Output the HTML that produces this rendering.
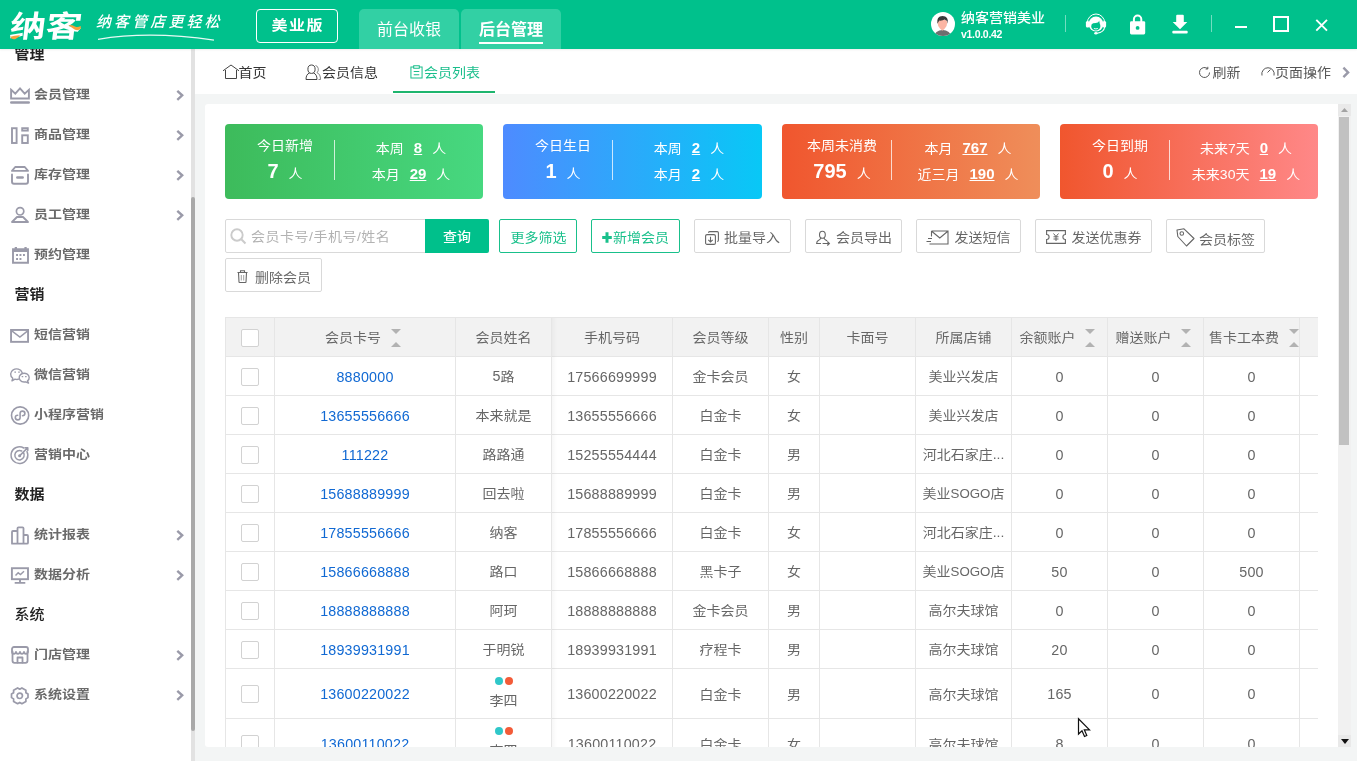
<!DOCTYPE html>
<html lang="zh-CN">
<head>
<meta charset="utf-8">
<title>纳客 - 会员列表</title>
<style>
*{box-sizing:border-box;margin:0;padding:0}
html,body{width:1357px;height:761px;overflow:hidden;background:#f3f5f5}
body{font-family:"Liberation Sans","Noto Sans CJK SC",sans-serif;font-size:14px;letter-spacing:0;color:#666;position:relative}
#L{position:absolute;left:0;top:0;width:1357px;height:761px;overflow:hidden;will-change:transform}
.z{display:inline-block;transform:scaleY(.9);transform-origin:50% calc(50% + 6px)}
.n{font-size:14px;letter-spacing:.2px}
.a{position:absolute;white-space:nowrap}
svg{position:absolute;overflow:visible}
/* top bar */
#top{position:absolute;left:0;top:0;width:1357px;height:49px;background:#00c18c;color:#fff;box-shadow:0 1px 2px rgba(0,0,0,.07);z-index:5}
#top .ver{position:absolute;left:256px;top:9px;width:82px;height:34px;border:1px solid #fff;border-radius:4px;font-size:16px;font-weight:bold;text-align:center;line-height:30px;letter-spacing:1.5px;padding-left:1.5px}
#top .tab{position:absolute;top:9px;height:40px;width:100px;background:#32d0a4;border-radius:5px 5px 0 0;font-size:16px;text-align:center;line-height:42px;letter-spacing:0}
#top .tab.on{font-weight:bold}
#top .tab.on:after{content:"";position:absolute;left:18px;width:64px;top:33px;height:2px;background:#fff}
#top .name{position:absolute;left:961px;top:8px;font-size:14px;font-weight:500;line-height:19px;white-space:nowrap;transform:scaleY(.9);transform-origin:0 calc(50% + 6px)}
#top .v{position:absolute;left:961px;top:27px;font-size:10.5px;line-height:14px;font-weight:bold;letter-spacing:-.3px}
#top .dv{position:absolute;top:15px;width:1px;height:17px;background:rgba(255,255,255,.45)}
/* sidebar */
#side{position:absolute;left:0;top:49px;width:191px;height:712px;background:#fff;overflow:hidden}
#side .h{position:absolute;left:14.500px;font-size:15px;font-weight:bold;color:#222;line-height:20px;white-space:nowrap;letter-spacing:0;transform:scaleY(.93);transform-origin:0 calc(50% + 6px)}
#side .i{position:absolute;left:34px;font-size:14px;letter-spacing:0;font-weight:bold;color:#6a6a6a;line-height:20px;white-space:nowrap;transform:scaleY(.86);transform-origin:0 calc(50% + 6px)}
#sb{position:absolute;left:191px;top:49px;width:4px;height:712px;background:#e2e2e2}
#sbt{position:absolute;left:191px;top:197px;width:4px;height:534px;background:#a9a9a9;border-radius:2px}
/* tabs */
#tabs{position:absolute;left:195px;top:49px;width:1162px;height:45px;background:#fff}
#tabs .t{position:absolute;top:13px;line-height:20px;font-size:14px;color:#333;white-space:nowrap;transform:scaleY(.9);transform-origin:0 calc(50% + 6px)}
/* panel */
#panel{position:absolute;left:205px;top:104px;width:1133px;height:643px;background:#fff;overflow:hidden;border-radius:3px 0 0 3px}
#vs{position:absolute;left:1338px;top:104px;width:13px;height:643px;background:#f1f1f1}
.card{position:absolute;top:20px;width:258px;height:75px;border-radius:4px;color:#fff}
.card .a{line-height:20px;font-size:14px}
.card b{font-weight:bold}
.card .big{font-size:20px;font-weight:bold;letter-spacing:0}
.card .u{font-size:15px;font-weight:bold;text-decoration:underline;letter-spacing:0}
.card .ln{position:absolute;left:109px;top:16px;width:1px;height:40px;background:rgba(255,255,255,.75)}
.btn{position:absolute;height:34px;border:1px solid #d9d9d9;border-radius:2px;background:#fff;color:#666;font-size:14px;line-height:32px;white-space:nowrap}
.btn.g{border-color:#19c08b;color:#19c08b}
.btn span{position:absolute;top:0;transform:scaleY(.9);transform-origin:0 calc(50% + 6px)}
/* table */
#tb{position:absolute;left:20px;top:213px;width:1093px;height:440px;border-left:1px solid #e6e6e6;border-top:1px solid #e6e6e6;overflow:hidden}
#tb .hd{position:absolute;left:0;top:0;width:1093px;height:38px;background:#f2f2f2}
#tb .hl{position:absolute;left:0;width:1093px;height:1px;background:#e6e6e6}
#tb .vl{position:absolute;top:0;width:1px;height:440px;background:#e6e6e6}
#tb .c{position:absolute;text-align:center;font-size:14px;line-height:20px;color:#666;white-space:nowrap}
#tb .c.n,#tb .c i{font-size:14.300px;font-style:normal;transform:scaleY(1.08);transform-origin:50% calc(50% + 5px)}
#tb .c i{display:inline-block}
#tb .c.l{color:#1169d3}
#tb .cb{position:absolute;left:15px;width:18px;height:18px;border:1px solid #d2d2d2;border-radius:2px;background:#fff}
#tb .s1,#tb .s2{position:absolute;width:0;height:0;border-left:5px solid transparent;border-right:5px solid transparent}
#tb .s1{border-top:5px solid #b2b2b2}
#tb .s2{border-bottom:5px solid #b2b2b2}
.dot{position:absolute;width:8px;height:8px;border-radius:50%}
</style>
</head>
<body>
<div id="L">
<div id="top">
<div class="a" style="left:10px;top:7px;font-size:30px;line-height:40px;font-weight:bold;letter-spacing:0;transform:scaleX(1.200) skewX(-6deg);transform-origin:0 50%">纳客</div>
<svg style="left:0;top:0" width="240" height="49" viewBox="0 0 240 49"><path d="M10.200 36.800 q4.500 -1.700 9.800 -1.600 q-1.500 2.600 -4.500 3.800 q-3.500 1.300 -5.300 -2.200z" fill="#f7a23c"/><path d="M68.500 25 q3.500 -0.300 6.500 1.400 q2.500 1.300 5.800 -0.400 l0 2.800 q-3 2.300 -6.200 0.700 q-3.600 -2.200 -6.100 -4.500z" fill="#f7a23c"/><path d="M98 39.300 Q150 30.500 214 40.200" stroke="#fff" stroke-width="1.300" fill="none" opacity=".9"/></svg>
<div class="a" style="left:96px;top:10px;font-size:15px;line-height:24px;font-style:italic;letter-spacing:3.100px;font-weight:500">纳客管店更轻松</div>
<div class="ver"><span class="z" style="transform:scaleY(.88)">美业版</span></div>
<div class="tab" style="left:359px">前台收银</div>
<div class="tab on" style="left:461px">后台管理</div>
<svg style="left:931px;top:12px" width="24" height="24" viewBox="0 0 24 24"><defs><clipPath id="av"><circle cx="12" cy="12" r="12"/></clipPath></defs><circle cx="12" cy="12" r="12" fill="#fff"/><g clip-path="url(#av)"><ellipse cx="11.600" cy="25.200" rx="8.600" ry="7.200" fill="#6f6f6f"/><path d="M6.600 10.500 q0 -3 4.800 -3 q4.800 0 4.800 3 q0 4.200 -2.600 6.300 l-2.200 2 l-2.200 -2 q-2.600 -2.100 -2.600 -6.300z" fill="#fbb5a3"/><path d="M6.300 11.800 q-1 -7.800 5.200 -7.900 q6.300 0.100 5.400 7.900 q-0.500 -1.300 -0.800 -2.700 q-1.400 -0.600 -2.400 -1.500 q-2 1.200 -5.400 1 q-0.800 1.200 -2 3.200z" fill="#3a3a3a"/></g></svg>
<div class="name">纳客营销美业</div>
<div class="v">v1.0.0.42</div>
<div class="dv" style="left:1065px"></div>
<div class="dv" style="left:1211px"></div>
<svg style="left:1085px;top:13px" width="22" height="22" viewBox="0 0 22 22"><path d="M2.300 10 a8.700 9 0 0 1 17.400 0" fill="none" stroke="#fff" stroke-width="1"/><circle cx="11" cy="11" r="7.400" fill="#fff"/><path d="M6.200 13.300 q0 -2.300 2 -3 q2.800 -0.300 4.600 -0.900 q1.100 -0.500 1.300 -1.900 q0.600 1.900 0.600 2.900 q0.700 1.200 0.700 2.900 a4.600 4.300 0 0 1 -9.200 0z" fill="#00c08b"/><path d="M8.900 15.500 q2 0.800 4 0" fill="none" stroke="#fff" stroke-width="0.900"/><rect x="0.900" y="7.900" width="3.500" height="6.600" rx="1.500" fill="#fff"/><rect x="17.600" y="7.900" width="3.500" height="6.600" rx="1.500" fill="#fff"/><path d="M19.700 14 q-0.800 5.400 -7.600 6.200" fill="none" stroke="#fff" stroke-width="1.100"/><ellipse cx="10.900" cy="20.300" rx="1.700" ry="1.300" fill="#fff"/></svg>
<svg style="left:1130px;top:14px" width="16" height="21" viewBox="0 0 16 21"><path d="M3.900 8 V5.300 a3.700 3.700 0 0 1 7.400 0 V8" fill="none" stroke="#fff" stroke-width="2"/><rect x="0" y="7.200" width="15.200" height="13.200" rx="1.400" fill="#fff"/><circle cx="7.600" cy="13.900" r="1.900" fill="#00c08b"/></svg>
<svg style="left:1172px;top:14px" width="16" height="20" viewBox="0 0 16 20"><path d="M5.200 0.800 h5.600 a1 1 0 0 1 1 1 V8 h3.500 L8 15.200 L0.700 8 H4.200 V1.800 a1 1 0 0 1 1 -1z" fill="#fff"/><rect x="0.300" y="16.800" width="15.400" height="2.600" rx="1" fill="#fff"/></svg>
<div class="a" style="left:1235px;top:26px;width:12px;height:2px;background:#fff"></div>
<div class="a" style="left:1273px;top:16px;width:16px;height:16px;border:2px solid #fff"></div>
<svg style="left:1315px;top:19px" width="13" height="13" viewBox="0 0 13 13"><path d="M1.300 0.900 L12 11.600 M12 0.900 L1.300 11.600" stroke="#fff" stroke-width="1.900" fill="none"/></svg>
</div>
<div id="side">
<svg style="left:0;top:0" width="191" height="712" viewBox="0 49 191 712">
<g transform="translate(0 94)"><path d="M11.1 -4.2 L15.3 -0.4 L20 -5.6 L24.7 -0.4 L28.9 -4.2 V4.5 H11.1 Z" fill="none" stroke="#9a9aa9" stroke-width="1.9" stroke-linejoin="miter"/><path d="M11.3 8.5 H28.700" fill="none" stroke="#9a9aa9" stroke-width="2.6" stroke-linecap="round"/><path d="M177.300 -3.200 L182.200 1.350 L177.300 5.900" fill="none" stroke="#9a9aa9" stroke-width="2.400"/></g>
<g transform="translate(0 134)"><rect x="12" y="-5.800" width="4.600" height="14.800" fill="none" stroke="#9a9aa9" stroke-width="1.9" stroke-linejoin="miter"/><rect x="22.200" y="-5.800" width="5.600" height="2.400" fill="none" stroke="#9a9aa9" stroke-width="1.9" stroke-linejoin="miter"/><rect x="22.200" y="1.300" width="5.600" height="7.700" fill="none" stroke="#9a9aa9" stroke-width="1.9" stroke-linejoin="miter"/><path d="M177.300 -3.200 L182.200 1.350 L177.300 5.900" fill="none" stroke="#9a9aa9" stroke-width="2.400"/></g>
<g transform="translate(0 174)"><path d="M15.200 -7 H24.800 L28 -3.100 H12 Z" fill="none" stroke="#9a9aa9" stroke-width="1.9" stroke-linejoin="round" stroke-linecap="round"/><path d="M12 0.500 V7.800 a2 2 0 0 0 2 2 H26 a2 2 0 0 0 2 -2 V0.500" fill="none" stroke="#9a9aa9" stroke-width="1.9" stroke-linejoin="round" stroke-linecap="round"/><path d="M17.300 3.500 H22.700" fill="none" stroke="#9a9aa9" stroke-width="2.400" stroke-linecap="round"/><path d="M177.300 -3.200 L182.200 1.350 L177.300 5.900" fill="none" stroke="#9a9aa9" stroke-width="2.400"/></g>
<g transform="translate(0 214)"><circle cx="20.100" cy="-2.700" r="3.700" fill="none" stroke="#9a9aa9" stroke-width="1.7" stroke-linejoin="round" stroke-linecap="round"/><path d="M17 3 H23 L28 8 H12 Z" fill="none" stroke="#9a9aa9" stroke-width="1.8" stroke-linejoin="round" stroke-linecap="round"/><path d="M177.300 -3.200 L182.200 1.350 L177.300 5.900" fill="none" stroke="#9a9aa9" stroke-width="2.400"/></g>
<g transform="translate(0 254)"><path d="M13 -2.500 V8.800 H28 V-2.500" fill="none" stroke="#9a9aa9" stroke-width="1.9" stroke-linejoin="miter"/><path d="M12.050 -5.800 H28.950 V-2 H12.050 Z M14.700 -6.900 H17 V-5 H14.700 Z M24.400 -6.900 H26.700 V-5 H24.400 Z" fill="#9a9aa9"/><path d="M16.100 0.100 h1.900 v1.900 h-1.900z M19.500 0.100 h1.900 v1.900 h-1.900z M23 0.100 h1.900 v1.900 h-1.900z M16.100 4 h1.900 v1.900 h-1.900z M19.500 4 h1.900 v1.900 h-1.900z" fill="#9a9aa9"/></g>
<g transform="translate(0 334)"><rect x="11.050" y="-4.050" width="17" height="11.900" fill="none" stroke="#9a9aa9" stroke-width="1.9" stroke-linejoin="miter"/><path d="M11.500 -3.300 L19.900 3 L28 -3.300" fill="none" stroke="#9a9aa9" stroke-width="1.500"/></g>
<g transform="translate(0 374)"><path d="M12.800 4.300 a5.900 5.300 0 1 1 4.200 1.200 q-1 0 -2 -0.300 l-3 1.600 z" fill="#fff" stroke="#9a9aa9" stroke-width="1.400" stroke-linejoin="round" stroke-linecap="round"/><path d="M27.500 6.900 a5 4.400 0 1 0 -3.400 1.100 q0.900 0 1.600 -0.200 l2.800 1.300 z" fill="#fff" stroke="#9a9aa9" stroke-width="1.400" stroke-linejoin="round" stroke-linecap="round"/><path d="M14.400 -1.800 h1.600 M18.200 -1.800 h1.600 M21.700 2.600 h1.500 M25.100 2.600 h1.500" fill="none" stroke="#9a9aa9" stroke-width="1.200"/></g>
<g transform="translate(0 414)"><circle cx="20.100" cy="1.500" r="8.600" fill="none" stroke="#9a9aa9" stroke-width="1.600" stroke-linejoin="round" stroke-linecap="round"/><path d="M20.100 3.700 a2.400 2.300 0 1 1 -2.400 -2.400 M20.100 3.700 V-0.700 a2.400 2.300 0 1 1 2.400 2.400" fill="none" stroke="#9a9aa9" stroke-width="1.600" stroke-linejoin="round" stroke-linecap="round"/></g>
<g transform="translate(0 454)"><path d="M27 -2.500 a8.400 8.400 0 1 1 -3.200 -3.500" fill="none" stroke="#9a9aa9" stroke-width="1.5" stroke-linejoin="round" stroke-linecap="round"/><path d="M23.400 -1.500 a4.700 4.700 0 1 1 -1.700 -1.500" fill="none" stroke="#9a9aa9" stroke-width="1.5" stroke-linejoin="round" stroke-linecap="round"/><circle cx="19.600" cy="1.800" r="1.500" fill="#9a9aa9"/><path d="M19.800 1.600 L27.500 -6.100 M25 -6.300 h2.800 v2.800" fill="none" stroke="#9a9aa9" stroke-width="1.5" stroke-linejoin="round" stroke-linecap="round"/></g>
<g transform="translate(0 534)"><path d="M12 9.700 V-2 a1 1 0 0 1 1 -1 H17.500 V-5.700 a1 1 0 0 1 1 -1 H22.500 a1 1 0 0 1 1 1 V1 H27 a1 1 0 0 1 1 1 V8.700 a1 1 0 0 1 -1 1 H13 a1 1 0 0 1 -1 -1 M17.500 -3 V9.700 M23.500 1 V9.700" fill="none" stroke="#9a9aa9" stroke-width="1.800" stroke-linejoin="round" stroke-linecap="round"/><path d="M177.300 -3.200 L182.200 1.350 L177.300 5.900" fill="none" stroke="#9a9aa9" stroke-width="2.400"/></g>
<g transform="translate(0 574)"><rect x="11.900" y="-5.800" width="16.100" height="11" fill="none" stroke="#9a9aa9" stroke-width="1.9" stroke-linejoin="miter"/><path d="M20 5 V8.900 M14.700 8.900 H25.300" fill="none" stroke="#9a9aa9" stroke-width="1.900"/><path d="M15.500 1.500 L18.200 -1.200 L20.500 0.500 L24 -2.800" fill="none" stroke="#9a9aa9" stroke-width="1.500"/><path d="M177.300 -3.200 L182.200 1.350 L177.300 5.900" fill="none" stroke="#9a9aa9" stroke-width="2.400"/></g>
<g transform="translate(0 654)"><path d="M12.500 -2.500 V6.800 a2 2 0 0 0 2 2 H25.500 a2 2 0 0 0 2 -2 V-2.500" fill="none" stroke="#9a9aa9" stroke-width="1.800" stroke-linejoin="round" stroke-linecap="round"/><path d="M12 -2.200 V-5 a2 2 0 0 1 2 -2 H26 a2 2 0 0 1 2 2 V-2.200 a2 2 0 0 1 -4 0 a2 2 0 0 1 -4 0 a2 2 0 0 1 -4 0 a2 2 0 0 1 -4 0z" fill="none" stroke="#9a9aa9" stroke-width="1.800" stroke-linejoin="round" stroke-linecap="round"/><path d="M17.500 8.600 V3.500 H22.500 V8.600" fill="none" stroke="#9a9aa9" stroke-width="1.800" stroke-linejoin="round" stroke-linecap="round"/><path d="M177.300 -3.200 L182.200 1.350 L177.300 5.900" fill="none" stroke="#9a9aa9" stroke-width="2.400"/></g>
<g transform="translate(0 694)"><path d="M17.600 -6.100 L19.750 -4.800 L21.900 -6.100 L25.900 -3.800 L25.900 -1.300 L28 0 L28 3.600 L25.900 4.900 L25.900 7.400 L21.900 9.700 L19.750 8.400 L17.600 9.700 L13.600 7.400 L13.600 4.900 L11.500 3.600 L11.500 0 L13.600 -1.300 L13.600 -3.800 Z" fill="none" stroke="#9a9aa9" stroke-width="1.700" stroke-linejoin="round" stroke-linecap="round"/><circle cx="19.750" cy="1.800" r="2.700" fill="none" stroke="#9a9aa9" stroke-width="1.700" stroke-linejoin="round" stroke-linecap="round"/><path d="M177.300 -3.200 L182.200 1.350 L177.300 5.900" fill="none" stroke="#9a9aa9" stroke-width="2.400"/></g>
</svg>
<div class="h" style="top:-5px">管理</div>
<div class="i" style="top:35px">会员管理</div>
<div class="i" style="top:75px">商品管理</div>
<div class="i" style="top:115px">库存管理</div>
<div class="i" style="top:155px">员工管理</div>
<div class="i" style="top:195px">预约管理</div>
<div class="h" style="top:235px">营销</div>
<div class="i" style="top:275px">短信营销</div>
<div class="i" style="top:315px">微信营销</div>
<div class="i" style="top:355px">小程序营销</div>
<div class="i" style="top:395px">营销中心</div>
<div class="h" style="top:435px">数据</div>
<div class="i" style="top:475px">统计报表</div>
<div class="i" style="top:515px">数据分析</div>
<div class="h" style="top:555px;font-weight:500">系统</div>
<div class="i" style="top:595px">门店管理</div>
<div class="i" style="top:635px">系统设置</div>
</div>
<div id="sb"></div><div id="sbt"></div>
<div id="tabs">
<svg style="left:26.500px;top:15px" width="18" height="16" viewBox="0 0 18 16"><path d="M1 6.800 L9 1 L17 6.800 M3.500 6 V14.500 H14.500 V6" fill="none" stroke="#444" stroke-width="1"/></svg>
<div class="t" style="left:43.500px">首页</div>
<svg style="left:110px;top:15px" width="18" height="17" viewBox="0 0 18 17"><path d="M6.500 1 a3.600 4.200 0 0 1 0 8.400 a3.600 4.200 0 0 1 0 -8.400z M4.500 9 q-3.500 1.200 -3.500 6.500 h11 q0 -5.300 -3.500 -6.500" fill="none" stroke="#444" stroke-width="1"/><path d="M10.500 1.500 a3.300 4 0 0 1 1.500 7.200 q3.500 1.300 3.500 6.800 h-2" fill="none" stroke="#777" stroke-width="0.900"/></svg>
<div class="t" style="left:127px">会员信息</div>
<svg style="left:214.500px;top:15.500px" width="13" height="14" viewBox="0 0 14 15"><path d="M4 2 H1 V14 H13 V2 H10 M4 0.800 H10 V3.500 H4 Z M4 7 H10 M4 10.500 H10" fill="none" stroke="#19be8b" stroke-width="1.100"/></svg>
<div class="t" style="left:229px;color:#19be8b">会员列表</div>
<div class="a" style="left:198px;top:42px;width:102px;height:2px;background:#1eb56e"></div>
<svg style="left:1003px;top:17px" width="13" height="13" viewBox="0 0 13 13"><path d="M11.500 6.500 a5 5 0 1 1 -2 -4 M9.800 0.800 V3 H7.600" fill="none" stroke="#555" stroke-width="1"/></svg>
<div class="t" style="left:1017.500px;color:#555">刷新</div>
<svg style="left:1066px;top:17px" width="14" height="13" viewBox="0 0 14 13"><path d="M1 9.500 a6.200 6.200 0 1 1 12 0 M6.500 6.500 L9.500 3.500" fill="none" stroke="#555" stroke-width="1"/></svg>
<div class="t" style="left:1080px;color:#555">页面操作</div>
<svg style="left:1147px;top:18px" width="8" height="11" viewBox="0 0 8 11"><path d="M1.400 0.700 L6.100 5.400 L1.400 10.100" fill="none" stroke="#9a9aa9" stroke-width="2.400"/></svg>
</div>
<div id="panel">
<div class="card" style="left:20px;background:linear-gradient(90deg,#3dbb5b,#47d880)"><div class="a z" style="left:0;width:120px;top:11px;text-align:center">今日新增</div><div class="a" style="left:0;width:120px;top:35px;text-align:center;line-height:24px"><span class="big">7</span><span class="z" style="margin-left:10px">人</span></div><div class="ln"></div><div class="a" style="left:114px;width:144px;top:14px;text-align:center"><span class="z">本周</span><span class="u" style="margin:0 10px">8</span><span class="z">人</span></div><div class="a" style="left:114px;width:144px;top:40px;text-align:center"><span class="z">本月</span><span class="u" style="margin:0 10px">29</span><span class="z">人</span></div></div>
<div class="card" style="left:298px;background:linear-gradient(90deg,#4e8bff,#08c8f6);width:259px"><div class="a z" style="left:0;width:120px;top:11px;text-align:center">今日生日</div><div class="a" style="left:0;width:120px;top:35px;text-align:center;line-height:24px"><span class="big">1</span><span class="z" style="margin-left:10px">人</span></div><div class="ln"></div><div class="a" style="left:114px;width:144px;top:14px;text-align:center"><span class="z">本周</span><span class="u" style="margin:0 10px">2</span><span class="z">人</span></div><div class="a" style="left:114px;width:144px;top:40px;text-align:center"><span class="z">本月</span><span class="u" style="margin:0 10px">2</span><span class="z">人</span></div></div>
<div class="card" style="left:577px;background:linear-gradient(90deg,#f0562e,#ef8e5a)"><div class="a z" style="left:0;width:120px;top:11px;text-align:center">本周未消费</div><div class="a" style="left:0;width:120px;top:35px;text-align:center;line-height:24px"><span class="big">795</span><span class="z" style="margin-left:10px">人</span></div><div class="ln"></div><div class="a" style="left:114px;width:144px;top:14px;text-align:center"><span class="z">本月</span><span class="u" style="margin:0 10px">767</span><span class="z">人</span></div><div class="a" style="left:114px;width:144px;top:40px;text-align:center"><span class="z">近三月</span><span class="u" style="margin:0 10px">190</span><span class="z">人</span></div></div>
<div class="card" style="left:855px;background:linear-gradient(90deg,#f0562e,#ff8888)"><div class="a z" style="left:0;width:120px;top:11px;text-align:center">今日到期</div><div class="a" style="left:0;width:120px;top:35px;text-align:center;line-height:24px"><span class="big">0</span><span class="z" style="margin-left:10px">人</span></div><div class="ln"></div><div class="a" style="left:114px;width:144px;top:14px;text-align:center"><span class="z">未来7天</span><span class="u" style="margin:0 10px">0</span><span class="z">人</span></div><div class="a" style="left:114px;width:144px;top:40px;text-align:center"><span class="z">未来30天</span><span class="u" style="margin:0 10px">19</span><span class="z">人</span></div></div>
<div class="a" style="left:20px;top:115px;width:201px;height:34px;border:1px solid #d9d9d9;border-radius:2px 0 0 2px;background:#fff"></div>
<svg style="left:25px;top:124px" width="17" height="17" viewBox="0 0 17 17"><circle cx="7" cy="7" r="5.700" fill="none" stroke="#cbcbcb" stroke-width="1.900"/><path d="M11.300 11.300 L15.500 15.500" stroke="#cbcbcb" stroke-width="2" fill="none"/></svg>
<div class="a z" style="left:46px;top:122px;line-height:20px;color:#b2b2b2;letter-spacing:.5px">会员卡号/手机号/姓名</div>
<div class="a" style="left:220px;top:115px;width:64px;height:34px;background:#00c08b;border-radius:0 2px 2px 0;color:#fff;font-weight:500;text-align:center;line-height:35px"><span class="z">查询</span></div>
<div class="btn g" style="left:294px;top:115px;width:78px"><span style="left:10.500px;line-height:34px">更多筛选</span></div>
<div class="btn g" style="left:386px;top:115px;width:89px"><span style="left:21px;line-height:34px">新增会员</span></div>
<svg style="left:397px;top:128px" width="10" height="11" viewBox="0 0 10 11"><path d="M5 0.300 V10.700 M0.200 5.500 H9.800" stroke="#19c08b" stroke-width="3" fill="none"/></svg>
<div class="btn" style="left:489px;top:115px;width:97px"><span style="left:29px;line-height:34px">批量导入</span></div>
<svg style="left:500px;top:127px" width="14" height="14" viewBox="0 0 14 14"><rect x="0.600" y="3.600" width="9.800" height="9.800" rx="1.500" fill="none" stroke="#666" stroke-width="1.100"/><path d="M3.500 1.800 q0 -1.200 1.200 -1.200 h7.500 q1.200 0 1.200 1.200 v7.500 q0 1.200 -1.200 1.200" fill="none" stroke="#666" stroke-width="1.100"/><path d="M5.500 5.800 V11 M3.300 8.800 L5.500 11 L7.700 8.800" fill="none" stroke="#666" stroke-width="1.100"/></svg>
<div class="btn" style="left:600px;top:115px;width:97px"><span style="left:30px;line-height:34px">会员导出</span></div>
<svg style="left:611px;top:126px" width="15" height="16" viewBox="0 0 15 16"><path d="M6.400 1.300 a2.900 3.500 0 0 1 0 7 a2.900 3.500 0 0 1 0 -7z M4.700 7.600 q0 1.800 -1.600 2.400 q-2.500 1 -2.500 3.500 h4.400 M8.100 7.600 q0 1.800 1.600 2.400 q0.900 0.400 1.400 1 M6.600 13.500 H13.300 M11.300 11.500 L13.400 13.500 L11.300 15.500" fill="none" stroke="#666" stroke-width="1.100"/></svg>
<div class="btn" style="left:711px;top:115px;width:105px"><span style="left:37.500px;line-height:34px">发送短信</span></div>
<svg style="left:721px;top:126px" width="23" height="15" viewBox="0 0 23 15"><path d="M5.500 1 H22 V14 H3.500 M5.500 1 V6.500 M6 1.500 L13.800 8 L21.500 1.500 M2 8.500 H6 M0.500 11.500 H5" fill="none" stroke="#666" stroke-width="1.100"/></svg>
<div class="btn" style="left:830px;top:115px;width:117px"><span style="left:35.500px;line-height:34px">发送优惠券</span></div>
<svg style="left:841px;top:126px" width="20" height="14" viewBox="0 0 20 14"><path d="M0.600 0.600 H19.400 V4.500 a2.500 2.500 0 0 0 0 5 V13.400 H0.600 V9.500 a2.500 2.500 0 0 0 0 -5 Z" fill="none" stroke="#666" stroke-width="1.100"/><path d="M7.500 3.500 L10 6.500 L12.500 3.500 M10 6.500 V11 M7.500 6.800 H12.500 M7.500 9 H12.500" fill="none" stroke="#666" stroke-width="1"/></svg>
<div class="btn" style="left:961px;top:115px;width:99px"><span style="left:32px;line-height:38px">会员标签</span></div>
<svg style="left:971px;top:124px" width="19" height="19" viewBox="0 0 19 19"><path d="M1 2 L8 0.800 L18 10.500 L10.500 18 L1.800 8.500 Z" fill="none" stroke="#666" stroke-width="1.100" stroke-linejoin="round"/><circle cx="5.800" cy="5.500" r="1.800" fill="none" stroke="#666" stroke-width="1.100"/></svg>
<div class="btn" style="left:20px;top:154px;width:97px"><span style="left:29px;line-height:36px">删除会员</span></div>
<svg style="left:32px;top:166px" width="11" height="13" viewBox="0 0 11 13"><path d="M0.500 2.500 H10.500 M3.500 2.300 V0.700 H7.500 V2.300 M1.500 2.500 L2 12 q0 0.500 0.600 0.500 H8.400 q0.600 0 0.600 -0.500 L9.500 2.500" fill="none" stroke="#666" stroke-width="1.100"/><path d="M4.300 5 V10.500 M6.700 5 V10.500" fill="none" stroke="#888" stroke-width="0.800"/></svg>
<div id="tb">
<div class="hd"></div>
<div class="hl" style="top:38px"></div><div class="hl" style="top:77px"></div><div class="hl" style="top:116px"></div><div class="hl" style="top:155px"></div><div class="hl" style="top:194px"></div><div class="hl" style="top:233px"></div><div class="hl" style="top:272px"></div><div class="hl" style="top:311px"></div><div class="hl" style="top:350px"></div><div class="hl" style="top:400px"></div><div class="hl" style="top:450px"></div>
<div class="vl" style="left:48px"></div><div class="vl" style="left:229px"></div><div class="vl" style="left:325px"></div><div class="vl" style="left:446px"></div><div class="vl" style="left:542px"></div><div class="vl" style="left:593px"></div><div class="vl" style="left:689px"></div><div class="vl" style="left:785px"></div><div class="vl" style="left:881px"></div><div class="vl" style="left:977px"></div><div class="vl" style="left:1073px"></div><div class="vl" style="left:1092px;height:38px"></div><div class="a" style="left:326px;top:0;width:5px;height:440px;background:linear-gradient(90deg,rgba(0,0,0,.03),rgba(0,0,0,0))"></div>
<div class="cb" style="top:11px"></div>
<div class="c z" style="left:99.0px;top:9px;width:56px">会员卡号</div><div class="s1" style="left:164.5px;top:11px"></div><div class="s2" style="left:164.5px;top:24px"></div>
<div class="c z" style="left:230px;top:9px;width:95px">会员姓名</div>
<div class="c z" style="left:326px;top:9px;width:120px">手机号码</div>
<div class="c z" style="left:447px;top:9px;width:95px">会员等级</div>
<div class="c z" style="left:543px;top:9px;width:50px">性别</div>
<div class="c z" style="left:594px;top:9px;width:95px">卡面号</div>
<div class="c z" style="left:690px;top:9px;width:95px">所属店铺</div>
<div class="c z" style="left:793.5px;top:9px;width:56px">余额账户</div><div class="s1" style="left:859.0px;top:11px"></div><div class="s2" style="left:859.0px;top:24px"></div>
<div class="c z" style="left:889.5px;top:9px;width:56px">赠送账户</div><div class="s1" style="left:955.0px;top:11px"></div><div class="s2" style="left:955.0px;top:24px"></div>
<div class="c z" style="left:983.0px;top:9px;width:70px">售卡工本费</div><div class="s1" style="left:1062.5px;top:11px"></div><div class="s2" style="left:1062.5px;top:24px"></div>
<div class="cb" style="top:50px"></div><div class="c n l" style="left:49px;top:48.8px;width:180px">8880000</div><div class="c" style="left:230px;top:47.8px;width:95px"><i>5</i><span class="z">路</span></div><div class="c n" style="left:326px;top:48.8px;width:120px">17566699999</div><div class="c" style="left:447px;top:47.8px;width:95px"><span class="z">金卡会员</span></div><div class="c" style="left:543px;top:47.8px;width:50px"><span class="z">女</span></div><div class="c" style="left:690px;top:47.8px;width:95px"><span class="z">美业兴发店</span></div><div class="c n" style="left:786px;top:48.8px;width:95px">0</div><div class="c n" style="left:882px;top:48.8px;width:95px">0</div><div class="c n" style="left:978px;top:48.8px;width:95px">0</div>
<div class="cb" style="top:89px"></div><div class="c n l" style="left:49px;top:87.8px;width:180px">13655556666</div><div class="c" style="left:230px;top:86.8px;width:95px"><span class="z">本来就是</span></div><div class="c n" style="left:326px;top:87.8px;width:120px">13655556666</div><div class="c" style="left:447px;top:86.8px;width:95px"><span class="z">白金卡</span></div><div class="c" style="left:543px;top:86.8px;width:50px"><span class="z">女</span></div><div class="c" style="left:690px;top:86.8px;width:95px"><span class="z">美业兴发店</span></div><div class="c n" style="left:786px;top:87.8px;width:95px">0</div><div class="c n" style="left:882px;top:87.8px;width:95px">0</div><div class="c n" style="left:978px;top:87.8px;width:95px">0</div>
<div class="cb" style="top:128px"></div><div class="c n l" style="left:49px;top:126.8px;width:180px">111222</div><div class="c" style="left:230px;top:125.8px;width:95px"><span class="z">路路通</span></div><div class="c n" style="left:326px;top:126.8px;width:120px">15255554444</div><div class="c" style="left:447px;top:125.8px;width:95px"><span class="z">白金卡</span></div><div class="c" style="left:543px;top:125.8px;width:50px"><span class="z">男</span></div><div class="c" style="left:690px;top:125.8px;width:95px"><span class="z">河北石家庄...</span></div><div class="c n" style="left:786px;top:126.8px;width:95px">0</div><div class="c n" style="left:882px;top:126.8px;width:95px">0</div><div class="c n" style="left:978px;top:126.8px;width:95px">0</div>
<div class="cb" style="top:167px"></div><div class="c n l" style="left:49px;top:165.8px;width:180px">15688889999</div><div class="c" style="left:230px;top:164.8px;width:95px"><span class="z">回去啦</span></div><div class="c n" style="left:326px;top:165.8px;width:120px">15688889999</div><div class="c" style="left:447px;top:164.8px;width:95px"><span class="z">白金卡</span></div><div class="c" style="left:543px;top:164.8px;width:50px"><span class="z">男</span></div><div class="c" style="left:690px;top:164.8px;width:95px"><span class="z">美业<span style="font-size:13.300px">SOGO</span>店</span></div><div class="c n" style="left:786px;top:165.8px;width:95px">0</div><div class="c n" style="left:882px;top:165.8px;width:95px">0</div><div class="c n" style="left:978px;top:165.8px;width:95px">0</div>
<div class="cb" style="top:206px"></div><div class="c n l" style="left:49px;top:204.8px;width:180px">17855556666</div><div class="c" style="left:230px;top:203.8px;width:95px"><span class="z">纳客</span></div><div class="c n" style="left:326px;top:204.8px;width:120px">17855556666</div><div class="c" style="left:447px;top:203.8px;width:95px"><span class="z">白金卡</span></div><div class="c" style="left:543px;top:203.8px;width:50px"><span class="z">女</span></div><div class="c" style="left:690px;top:203.8px;width:95px"><span class="z">河北石家庄...</span></div><div class="c n" style="left:786px;top:204.8px;width:95px">0</div><div class="c n" style="left:882px;top:204.8px;width:95px">0</div><div class="c n" style="left:978px;top:204.8px;width:95px">0</div>
<div class="cb" style="top:245px"></div><div class="c n l" style="left:49px;top:243.8px;width:180px">15866668888</div><div class="c" style="left:230px;top:242.8px;width:95px"><span class="z">路口</span></div><div class="c n" style="left:326px;top:243.8px;width:120px">15866668888</div><div class="c" style="left:447px;top:242.8px;width:95px"><span class="z">黑卡子</span></div><div class="c" style="left:543px;top:242.8px;width:50px"><span class="z">女</span></div><div class="c" style="left:690px;top:242.8px;width:95px"><span class="z">美业<span style="font-size:13.300px">SOGO</span>店</span></div><div class="c n" style="left:786px;top:243.8px;width:95px">50</div><div class="c n" style="left:882px;top:243.8px;width:95px">0</div><div class="c n" style="left:978px;top:243.8px;width:95px">500</div>
<div class="cb" style="top:284px"></div><div class="c n l" style="left:49px;top:282.8px;width:180px">18888888888</div><div class="c" style="left:230px;top:281.8px;width:95px"><span class="z">阿珂</span></div><div class="c n" style="left:326px;top:282.8px;width:120px">18888888888</div><div class="c" style="left:447px;top:281.8px;width:95px"><span class="z">金卡会员</span></div><div class="c" style="left:543px;top:281.8px;width:50px"><span class="z">男</span></div><div class="c" style="left:690px;top:281.8px;width:95px"><span class="z">高尔夫球馆</span></div><div class="c n" style="left:786px;top:282.8px;width:95px">0</div><div class="c n" style="left:882px;top:282.8px;width:95px">0</div><div class="c n" style="left:978px;top:282.8px;width:95px">0</div>
<div class="cb" style="top:323px"></div><div class="c n l" style="left:49px;top:321.8px;width:180px">18939931991</div><div class="c" style="left:230px;top:320.8px;width:95px"><span class="z">于明锐</span></div><div class="c n" style="left:326px;top:321.8px;width:120px">18939931991</div><div class="c" style="left:447px;top:320.8px;width:95px"><span class="z">疗程卡</span></div><div class="c" style="left:543px;top:320.8px;width:50px"><span class="z">男</span></div><div class="c" style="left:690px;top:320.8px;width:95px"><span class="z">高尔夫球馆</span></div><div class="c n" style="left:786px;top:321.8px;width:95px">20</div><div class="c n" style="left:882px;top:321.8px;width:95px">0</div><div class="c n" style="left:978px;top:321.8px;width:95px">0</div>
<div class="cb" style="top:367px"></div><div class="c n l" style="left:49px;top:366.3px;width:180px">13600220022</div><div class="dot" style="left:269px;top:359px;background:#2fc7c9"></div><div class="dot" style="left:279px;top:359px;background:#f35b38"></div><div class="c" style="left:230px;top:371.5px;width:95px"><span class="z">李四</span></div><div class="c n" style="left:326px;top:366.3px;width:120px">13600220022</div><div class="c" style="left:447px;top:366.3px;width:95px"><span class="z">白金卡</span></div><div class="c" style="left:543px;top:366.3px;width:50px"><span class="z">男</span></div><div class="c" style="left:690px;top:366.3px;width:95px"><span class="z">高尔夫球馆</span></div><div class="c n" style="left:786px;top:366.3px;width:95px">165</div><div class="c n" style="left:882px;top:366.3px;width:95px">0</div><div class="c n" style="left:978px;top:366.3px;width:95px">0</div>
<div class="cb" style="top:417px"></div><div class="c n l" style="left:49px;top:416.3px;width:180px">13600110022</div><div class="dot" style="left:269px;top:409px;background:#2fc7c9"></div><div class="dot" style="left:279px;top:409px;background:#f35b38"></div><div class="c" style="left:230px;top:421.5px;width:95px"><span class="z">李四</span></div><div class="c n" style="left:326px;top:416.3px;width:120px">13600110022</div><div class="c" style="left:447px;top:416.3px;width:95px"><span class="z">白金卡</span></div><div class="c" style="left:543px;top:416.3px;width:50px"><span class="z">女</span></div><div class="c" style="left:690px;top:416.3px;width:95px"><span class="z">高尔夫球馆</span></div><div class="c n" style="left:786px;top:416.3px;width:95px">8</div><div class="c n" style="left:882px;top:416.3px;width:95px">0</div><div class="c n" style="left:978px;top:416.3px;width:95px">0</div>
</div>
</div>
<div id="vs"><div class="a" style="left:0;top:0;width:13px;height:12px;background:#e9e9e9"></div><svg style="left:3px;top:4px" width="7" height="4" viewBox="0 0 7 4"><path d="M0 4 L3.500 0 L7 4z" fill="#a3a3a3"/></svg><div class="a" style="left:1px;top:13px;width:10px;height:328px;background:#c1c1c1"></div><div class="a" style="left:0;top:631px;width:13px;height:12px;background:#e9e9e9"></div><svg style="left:3px;top:635px" width="8" height="5" viewBox="0 0 8 5"><path d="M0 0 L8 0 L4 5z" fill="#111"/></svg></div>
<svg style="left:1078px;top:718px" width="13" height="20" viewBox="0 0 13 20"><path d="M0.500 0.800 V16 L4 12.700 L6.500 18.500 L8.800 17.500 L6.300 11.800 H11.500 Z" fill="#fff" stroke="#111" stroke-width="1.200"/></svg>
</div>
</body>
</html>
